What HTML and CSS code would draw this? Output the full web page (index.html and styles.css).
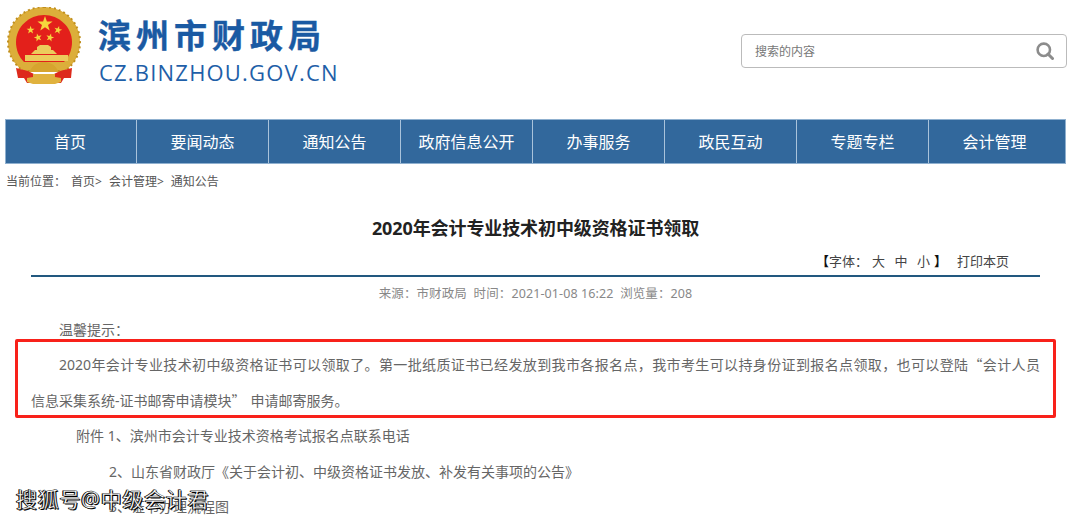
FILE: index.html

```html
<!DOCTYPE html>
<html lang="zh-CN">
<head>
    <meta charset="UTF-8">
    <title>2020年会计专业技术初中级资格证书领取</title>
    <link rel="stylesheet" href="styles.css">
</head>
<body>
    <div class="page">
        <div class="header">
            <div class="logo">
                <svg class="emblem" width="74" height="78" viewBox="0 0 74 78">
                    <defs>
                        <polygon id="star" points="0,-4.2 1,-1.3 4,-1.3 1.6,0.5 2.5,3.4 0,1.7 -2.5,3.4 -1.6,0.5 -4,-1.3 -1,-1.3" fill="#f5d63d"/>
                    </defs>
                    <path d="M37 0C57 0 73 15 73 35C73 48 67 57 58 64H16C7 57 1 48 1 35C1 15 17 0 37 0Z" fill="#dcae3a"/>
                    <path d="M37 0C57 0 73 15 73 35C73 48 67 57 58 64H16C7 57 1 48 1 35C1 15 17 0 37 0Z" fill="none" stroke="#c08f1e" stroke-width="2" stroke-dasharray="2 3"/>
                    <path d="M37 8C52 8 65 20 65 35C65 43 62 50 57 55H17C12 50 9 43 9 35C9 20 22 8 37 8Z" fill="#e3201b"/>
                    <polygon points="38,9 39.9,14.4 45.6,14.5 41,18 42.7,23.5 38,20.2 33.3,23.5 35,18 30.4,14.5 36.1,14.4" fill="#f5d63d"/>
                    <use href="#star" transform="translate(23.6 23)"/>
                    <use href="#star" transform="translate(51 23) rotate(15)"/>
                    <use href="#star" transform="translate(31 30.6) rotate(-15)"/>
                    <use href="#star" transform="translate(43 30.6) rotate(15)"/>
                    <path d="M24 47h26l-4-4h-2v-3l-3-2H33l-3 2v3h-2z" fill="#eccb5c"/>
                    <rect x="18" y="48" width="43" height="6" fill="#eccb5c"/>
                    <path d="M24 62c3-5 8-7 13-7s10 2 13 7l2 3H22z" fill="#d6a42e"/>
                    <path d="M9 61l12 3 6 3v9h-7l-3-5h-6z" fill="#dd2a1c"/>
                    <path d="M65 61l-12 3-6 3v9h7l3-5h7z" fill="#dd2a1c"/>
                    <path d="M26 67h22v3l6 1v4l-6 2H26l-6-2v-4l6-1z" fill="#e0b23e"/>
                </svg>
                <div class="logo-text">
                    <div class="logo-name">滨州市财政局</div>
                    <div class="logo-url">CZ.BINZHOU.GOV.CN</div>
                </div>
            </div>
            <div class="search">
                <span class="search-hint">搜索的内容</span>
                <svg width="18" height="18" viewBox="0 0 18 18">
                    <circle cx="7.8" cy="7.8" r="6.2" fill="none" stroke="#8c8c8c" stroke-width="2.6"/>
                    <path d="M12 12l4.5 4.5" stroke="#8c8c8c" stroke-width="3" stroke-linecap="round"/>
                </svg>
            </div>
        </div>

        <ul class="nav">
            <li>首页</li>
            <li>要闻动态</li>
            <li>通知公告</li>
            <li>政府信息公开</li>
            <li>办事服务</li>
            <li>政民互动</li>
            <li>专题专栏</li>
            <li>会计管理</li>
        </ul>

        <div class="crumb">
            <span class="crumb-label">当前位置&#65306;</span>
            <span>首页&gt;</span>
            <span>会计管理&gt;</span>
            <span>通知公告</span>
        </div>

        <div class="article">
            <h1>2020年会计专业技术初中级资格证书领取</h1>
            <div class="tools">
                <span class="font-size"><b>【</b>字体&#65306;<i>大</i><i>中</i><i>小</i><b class="close">】</b></span>
                <span>打印本页</span>
            </div>
            <div class="meta">来源&#65306;市财政局&nbsp; 时间&#65306;2021-01-08 16:22&nbsp; 浏览量&#65306;208</div>
            <p class="indent">温馨提示&#65306;</p>
            <p class="indent justified">2020年会计专业技术初中级资格证书可以领取了。第一批纸质证书已经发放到我市各报名点&#65292;我市考生可以持身份证到报名点领取&#65292;也可以登陆<span class="quote">“</span>会计人员</p>
            <p><span>信息采集系统-证书邮寄申请模块</span><span class="quote quote-end">”</span><span>申请邮寄服务。</span></p>
            <p class="attach">附件 1、滨州市会计专业技术资格考试报名点联系电话</p>
            <p class="attach-sub">2、山东省财政厅《关于会计初、中级资格证书发放、补发有关事项的公告》</p>
            <p class="attach-sub">3、证书办理流程图</p>
        </div>

        <div class="mark-box"></div>
        <div class="watermark">搜狐号@中级会计君</div>
    </div>
</body>
</html>
```

FILE: styles.css

```css
* {
    margin: 0;
    padding: 0;
    box-sizing: border-box;
}

body {
    font-family: "Noto Sans", "Noto Sans CJK SC", sans-serif;
    background: #fff;
    color: #666;
    overflow: hidden;
}

.page {
    position: relative;
    width: 1080px;
    height: 523px;
    overflow: hidden;
}

.header {
    height: 119px;
    display: flex;
    justify-content: space-between;
    padding: 7px 13px 0 7px;
}

.logo {
    display: flex;
    gap: 17px;
}

.logo-text {
    padding-top: 10px;
}

.logo-name {
    color: #1a5aa3;
    font-size: 33px;
    line-height: 38px;
    font-weight: bold;
    letter-spacing: 5px;
    -webkit-text-stroke: 0.4px #1a5aa3;
    white-space: nowrap;
}

.logo-url {
    color: #1f5fa8;
    font-family: "Open Sans", sans-serif;
    font-size: 22px;
    line-height: 26px;
    letter-spacing: 1.2px;
    margin: 4px 0 0 1px;
    white-space: nowrap;
}

.search {
    width: 326px;
    height: 34px;
    margin-top: 27px;
    border: 1px solid #bbb;
    border-radius: 4px;
    display: flex;
    align-items: center;
    justify-content: space-between;
    padding: 0 12px 0 13px;
}

.search-hint {
    font-size: 12px;
    color: #777;
}

.nav {
    list-style: none;
    display: flex;
    width: 1061px;
    height: 45px;
    margin-left: 5px;
    background: #32689c;
    border: 1px solid #8fb0cf;
}

.nav li {
    width: 132px;
    color: #fff;
    font-size: 16px;
    line-height: 44px;
    text-align: center;
    border-left: 1px solid #a9c3db;
}

.nav li:first-child {
    width: 130px;
    padding-right: 2px;
    border-left: none;
}

.crumb {
    display: flex;
    gap: 7px;
    font-size: 12px;
    line-height: 18px;
    color: #555;
    margin: 9px 0 0 6px;
}

.crumb-label {
    margin-right: -2px;
}

.article {
    margin: 0 40px 0 31px;
}

h1 {
    font-size: 18px;
    line-height: 26px;
    letter-spacing: -0.1px;
    color: #222;
    text-align: center;
    margin-top: 24px;
}

.tools {
    height: 36px;
    padding: 11px 31px 0 0;
    border-bottom: 2px solid #22587f;
    display: flex;
    justify-content: flex-end;
    gap: 10px;
    font-size: 13px;
    line-height: 18px;
    color: #444;
}

.tools b {
    color: #111;
}

.tools i {
    font-style: normal;
    margin-left: 9.5px;
}

.tools i:first-of-type {
    margin-left: 4px;
}

.tools .close {
    margin-left: 4px;
}

.meta {
    font-size: 12.5px;
    line-height: 18px;
    letter-spacing: 0.1px;
    color: #888;
    text-align: center;
    margin-top: 8px;
    margin-bottom: 9px;
}

.article p {
    font-size: 14px;
    line-height: 35.4px;
}

.justified {
    text-align: justify;
    text-align-last: justify;
    text-justify: inter-character;
}

.quote {
    font-family: "Noto Sans CJK SC", sans-serif;
}

.quote-end {
    margin-right: 5px;
}

.indent {
    text-indent: 28px;
}

.attach {
    text-indent: 45px;
}

.attach-sub {
    text-indent: 78px;
}

.mark-box {
    position: absolute;
    left: 15px;
    top: 339px;
    width: 1041px;
    height: 79px;
    border: 3px solid #f8211a;
    border-radius: 2px;
}

.watermark {
    position: absolute;
    left: 16px;
    top: 486px;
    font-size: 21px;
    line-height: 26px;
    letter-spacing: 0.7px;
    color: #fff;
    -webkit-text-stroke: 0.3px #000;
    text-shadow: 1px 1px 0 #000, -1px 0 0 #000;
    white-space: nowrap;
}
```
